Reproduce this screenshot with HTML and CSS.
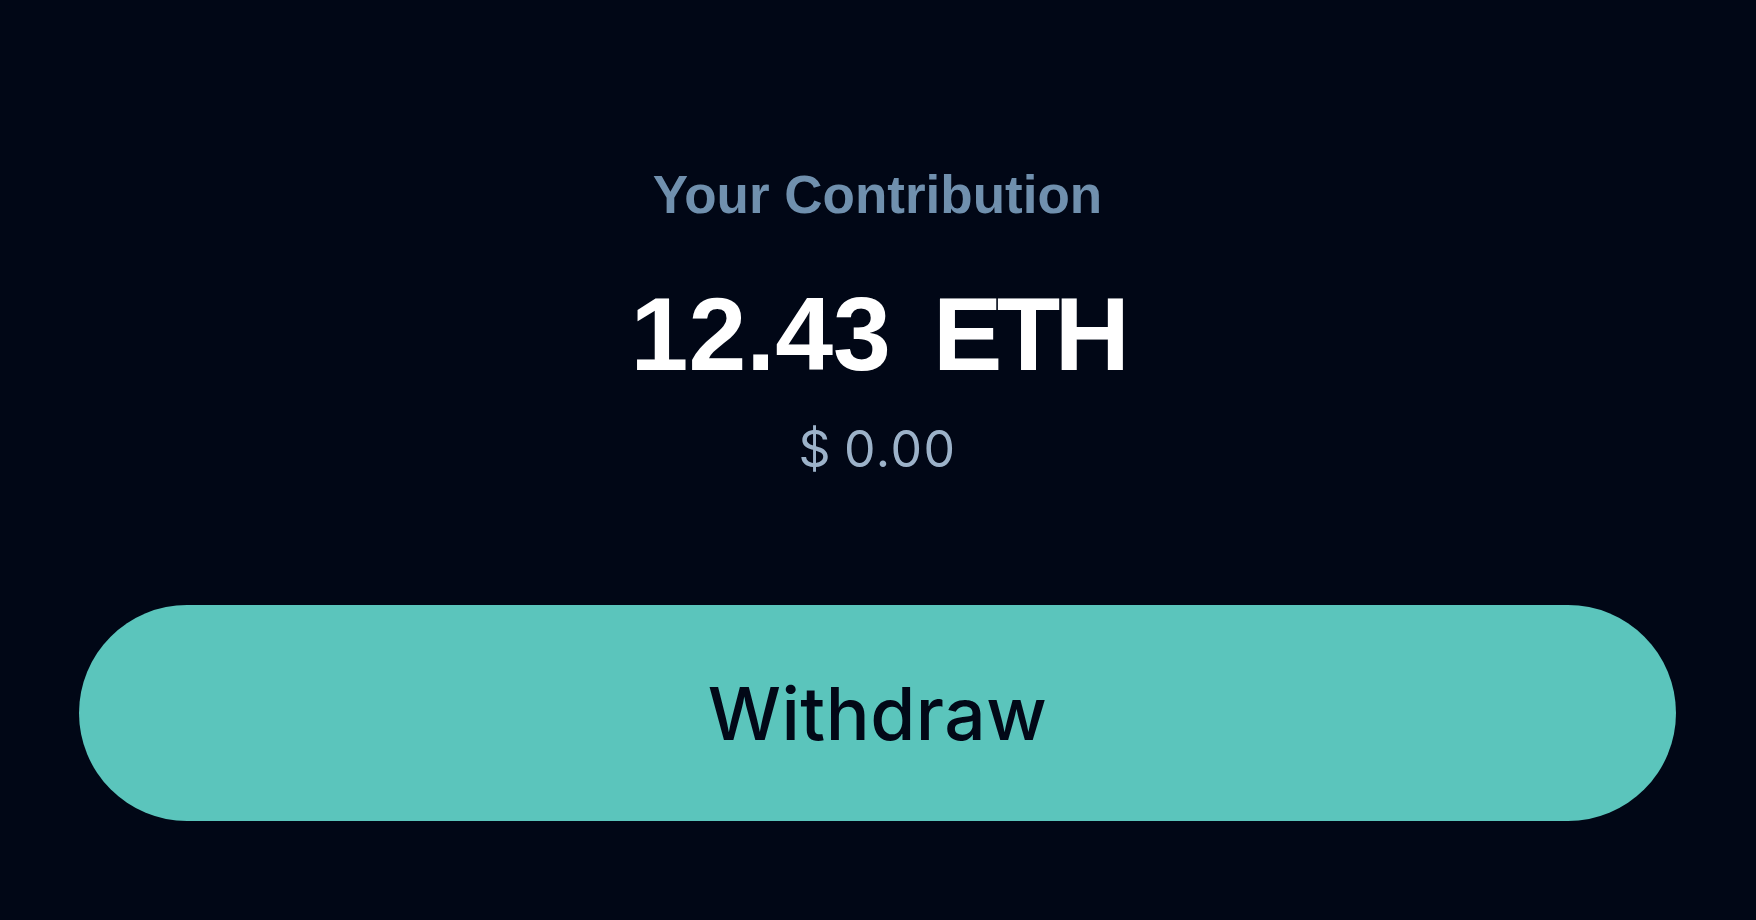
FILE: index.html
```html
<!DOCTYPE html>
<html lang="en">
<head>
<meta charset="utf-8">
<title>Your Contribution</title>
<link rel="stylesheet" href="styles.css">
</head>
<body>
<main class="panel">
  <section class="summary">
    <h2 class="title">Your Contribution</h2>
    <div class="amount"><span class="num">12.43</span><span class="unit">ETH</span></div>
    <div class="fiat"><span class="cur">$</span><span>0.00</span></div>
  </section>
  <button class="btn" type="button">Withdraw</button>
</main>
</body>
</html>
```

FILE: styles.css
```css
* { box-sizing: border-box; }
html, body {
  margin: 0;
  padding: 0;
  height: 100%;
  background: #010716;
}
body {
  font-family: "Liberation Sans", Arial, sans-serif;
}
.panel {
  display: flex;
  flex-direction: column;
  align-items: stretch;
  padding: 168px 80px 0 79px;
}
.summary {
  display: flex;
  flex-direction: column;
  align-items: center;
}
.title {
  margin: 0;
  font-size: 53px;
  line-height: 53px;
  font-weight: 700;
  letter-spacing: 0;
  color: #7090ae;
}
.amount {
  margin-top: 61px;
  display: flex;
  gap: 42px;
  font-size: 104px;
  line-height: 104px;
  font-weight: 700;
  color: #ffffff;
}
.num { letter-spacing: 0; }
.unit { letter-spacing: -5.5px; }
.fiat {
  margin-top: 38px;
  display: flex;
  gap: 12px;
  font-family: Inter, "Liberation Sans", sans-serif;
  font-size: 50px;
  line-height: 50px;
  font-weight: 400;
  letter-spacing: 1.5px;
  color: #9cb2c9;
}
.btn {
  margin-top: 131px;
  height: 216px;
  border: 0;
  border-radius: 9999px;
  background: #5bc5bc;
  color: #020817;
  font-family: Inter, "Liberation Sans", sans-serif;
  font-size: 73px;
  font-weight: 500;
  letter-spacing: 0.5px;
  display: flex;
  align-items: center;
  justify-content: center;
  padding: 0;
  cursor: pointer;
}
```
